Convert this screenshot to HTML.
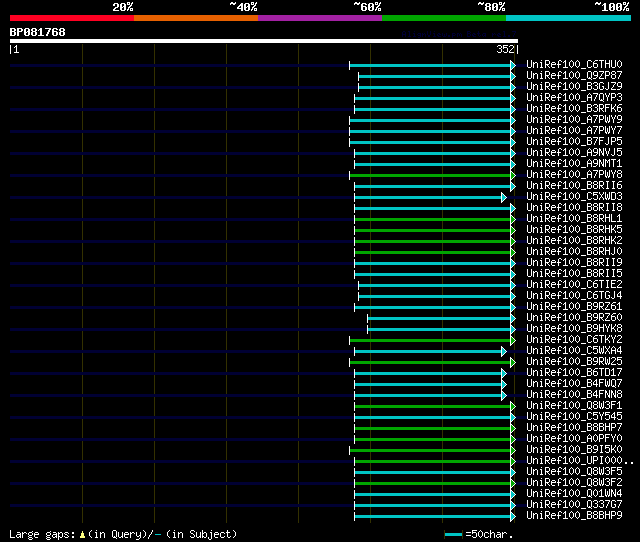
<!DOCTYPE html>
<html><head><meta charset="utf-8"><style>
html,body{margin:0;padding:0;background:#000;width:640px;height:542px;overflow:hidden}
svg{display:block}
</style></head><body>
<svg width="640" height="542" viewBox="0 0 640 542">
<defs><path id="m50" d="M1 3h4v1h-4zM0 4h2v1h-2zM4 4h2v1h-2zM0 5h2v1h-2zM4 5h2v1h-2zM4 6h2v1h-2zM2 7h3v1h-3zM1 8h2v1h-2zM0 9h2v1h-2zM0 10h6v1h-6z"/><path id="m48" d="M1 3h4v1h-4zM0 4h2v1h-2zM4 4h2v1h-2zM0 5h2v1h-2zM4 5h2v1h-2zM0 6h2v1h-2zM3 6h3v1h-3zM0 7h3v1h-3zM4 7h2v1h-2zM0 8h2v1h-2zM4 8h2v1h-2zM0 9h2v1h-2zM4 9h2v1h-2zM1 10h4v1h-4z"/><path id="m37" d="M0 2h3v1h-3zM5 2h1v1h-1zM0 3h1v1h-1zM2 3h1v1h-1zM4 3h2v1h-2zM0 4h3v1h-3zM4 4h1v1h-1zM3 5h2v1h-2zM2 6h2v1h-2zM1 7h2v1h-2zM1 8h1v1h-1zM3 8h3v1h-3zM0 9h2v1h-2zM3 9h1v1h-1zM5 9h1v1h-1zM0 10h1v1h-1zM3 10h3v1h-3z"/><path id="m126" d="M1 2h2v1h-2zM5 2h1v1h-1zM0 3h6v1h-6zM0 4h1v1h-1zM3 4h2v1h-2z"/><path id="m52" d="M4 3h2v1h-2zM3 4h3v1h-3zM2 5h4v1h-4zM1 6h2v1h-2zM4 6h2v1h-2zM0 7h2v1h-2zM4 7h2v1h-2zM0 8h6v1h-6zM4 9h2v1h-2zM4 10h2v1h-2z"/><path id="m54" d="M1 3h4v1h-4zM0 4h2v1h-2zM4 4h2v1h-2zM0 5h2v1h-2zM0 6h5v1h-5zM0 7h2v1h-2zM4 7h2v1h-2zM0 8h2v1h-2zM4 8h2v1h-2zM0 9h2v1h-2zM4 9h2v1h-2zM1 10h4v1h-4z"/><path id="m56" d="M1 3h4v1h-4zM0 4h2v1h-2zM4 4h2v1h-2zM0 5h2v1h-2zM4 5h2v1h-2zM1 6h4v1h-4zM0 7h2v1h-2zM4 7h2v1h-2zM0 8h2v1h-2zM4 8h2v1h-2zM0 9h2v1h-2zM4 9h2v1h-2zM1 10h4v1h-4z"/><path id="m49" d="M2 3h2v1h-2zM1 4h3v1h-3zM0 5h1v1h-1zM2 5h2v1h-2zM2 6h2v1h-2zM2 7h2v1h-2zM2 8h2v1h-2zM2 9h2v1h-2zM0 10h6v1h-6z"/><path id="m66" d="M0 3h5v1h-5zM0 4h2v1h-2zM4 4h2v1h-2zM0 5h2v1h-2zM4 5h2v1h-2zM0 6h5v1h-5zM0 7h2v1h-2zM4 7h2v1h-2zM0 8h2v1h-2zM4 8h2v1h-2zM0 9h2v1h-2zM4 9h2v1h-2zM0 10h5v1h-5z"/><path id="m80" d="M0 3h5v1h-5zM0 4h2v1h-2zM4 4h2v1h-2zM0 5h2v1h-2zM4 5h2v1h-2zM0 6h5v1h-5zM0 7h2v1h-2zM0 8h2v1h-2zM0 9h2v1h-2zM0 10h2v1h-2z"/><path id="m55" d="M0 3h6v1h-6zM4 4h2v1h-2zM3 5h2v1h-2zM3 6h2v1h-2zM2 7h2v1h-2zM2 8h2v1h-2zM1 9h2v1h-2zM1 10h2v1h-2z"/><path id="t65" d="M1 1h2v1h-2zM0 2h1v1h-1zM3 2h1v1h-1zM0 3h1v1h-1zM3 3h1v1h-1zM0 4h4v1h-4zM0 5h1v1h-1zM3 5h1v1h-1zM0 6h1v1h-1zM3 6h1v1h-1z"/><path id="t108" d="M1 1h2v1h-2zM2 2h1v1h-1zM2 3h1v1h-1zM2 4h1v1h-1zM2 5h1v1h-1zM1 6h3v1h-3z"/><path id="t105" d="M2 1h1v1h-1zM1 3h2v1h-2zM2 4h1v1h-1zM2 5h1v1h-1zM1 6h3v1h-3z"/><path id="t103" d="M1 3h3v1h-3zM0 4h1v1h-1zM3 4h1v1h-1zM1 5h3v1h-3zM3 6h1v1h-1zM1 7h2v1h-2z"/><path id="t110" d="M0 3h1v1h-1zM2 3h1v1h-1zM0 4h2v1h-2zM3 4h1v1h-1zM0 5h1v1h-1zM3 5h1v1h-1zM0 6h1v1h-1zM3 6h1v1h-1z"/><path id="t86" d="M0 1h1v1h-1zM3 1h1v1h-1zM0 2h1v1h-1zM3 2h1v1h-1zM0 3h1v1h-1zM3 3h1v1h-1zM0 4h1v1h-1zM3 4h1v1h-1zM1 5h2v1h-2zM1 6h2v1h-2z"/><path id="t101" d="M1 3h2v1h-2zM0 4h1v1h-1zM2 4h2v1h-2zM0 5h2v1h-2zM1 6h3v1h-3z"/><path id="t119" d="M0 3h1v1h-1zM4 3h1v1h-1zM0 4h1v1h-1zM2 4h1v1h-1zM4 4h1v1h-1zM0 5h1v1h-1zM2 5h1v1h-1zM4 5h1v1h-1zM1 6h3v1h-3z"/><path id="t46" d="M1 5h2v1h-2zM1 6h2v1h-2z"/><path id="t112" d="M0 3h3v1h-3zM0 4h1v1h-1zM3 4h1v1h-1zM0 5h3v1h-3zM0 6h1v1h-1zM0 7h1v1h-1z"/><path id="t109" d="M0 3h2v1h-2zM3 3h1v1h-1zM0 4h1v1h-1zM2 4h1v1h-1zM4 4h1v1h-1zM0 5h1v1h-1zM2 5h1v1h-1zM4 5h1v1h-1zM0 6h1v1h-1zM4 6h1v1h-1z"/><path id="t66" d="M0 1h3v1h-3zM0 2h1v1h-1zM3 2h1v1h-1zM0 3h3v1h-3zM0 4h1v1h-1zM3 4h1v1h-1zM0 5h1v1h-1zM3 5h1v1h-1zM0 6h3v1h-3z"/><path id="t116" d="M1 1h1v1h-1zM1 2h1v1h-1zM0 3h3v1h-3zM1 4h1v1h-1zM1 5h1v1h-1zM3 5h1v1h-1zM2 6h1v1h-1z"/><path id="t97" d="M1 3h3v1h-3zM0 4h1v1h-1zM3 4h1v1h-1zM0 5h1v1h-1zM2 5h2v1h-2zM1 6h1v1h-1zM3 6h1v1h-1z"/><path id="t114" d="M0 3h1v1h-1zM2 3h1v1h-1zM0 4h2v1h-2zM3 4h1v1h-1zM0 5h1v1h-1zM0 6h1v1h-1z"/><path id="t55" d="M0 1h4v1h-4zM3 2h1v1h-1zM2 3h1v1h-1zM2 4h1v1h-1zM1 5h1v1h-1zM1 6h1v1h-1z"/><path id="s49" d="M2 3h1v1h-1zM1 4h2v1h-2zM0 5h1v1h-1zM2 5h1v1h-1zM2 6h1v1h-1zM2 7h1v1h-1zM2 8h1v1h-1zM2 9h1v1h-1zM0 10h5v1h-5z"/><path id="s51" d="M1 3h3v1h-3zM0 4h1v1h-1zM4 4h1v1h-1zM4 5h1v1h-1zM2 6h2v1h-2zM4 7h1v1h-1zM4 8h1v1h-1zM0 9h1v1h-1zM4 9h1v1h-1zM1 10h3v1h-3z"/><path id="s53" d="M0 3h5v1h-5zM0 4h1v1h-1zM0 5h4v1h-4zM0 6h1v1h-1zM4 6h1v1h-1zM4 7h1v1h-1zM4 8h1v1h-1zM0 9h1v1h-1zM4 9h1v1h-1zM1 10h3v1h-3z"/><path id="s50" d="M1 3h3v1h-3zM0 4h1v1h-1zM4 4h1v1h-1zM4 5h1v1h-1zM3 6h1v1h-1zM2 7h1v1h-1zM1 8h1v1h-1zM0 9h1v1h-1zM0 10h5v1h-5z"/><path id="s85" d="M0 3h1v1h-1zM4 3h1v1h-1zM0 4h1v1h-1zM4 4h1v1h-1zM0 5h1v1h-1zM4 5h1v1h-1zM0 6h1v1h-1zM4 6h1v1h-1zM0 7h1v1h-1zM4 7h1v1h-1zM0 8h1v1h-1zM4 8h1v1h-1zM0 9h1v1h-1zM4 9h1v1h-1zM1 10h3v1h-3z"/><path id="s110" d="M0 5h1v1h-1zM2 5h2v1h-2zM0 6h2v1h-2zM4 6h1v1h-1zM0 7h1v1h-1zM4 7h1v1h-1zM0 8h1v1h-1zM4 8h1v1h-1zM0 9h1v1h-1zM4 9h1v1h-1zM0 10h1v1h-1zM4 10h1v1h-1z"/><path id="s105" d="M2 3h1v1h-1zM1 5h2v1h-2zM2 6h1v1h-1zM2 7h1v1h-1zM2 8h1v1h-1zM2 9h1v1h-1zM1 10h3v1h-3z"/><path id="s82" d="M0 3h4v1h-4zM0 4h1v1h-1zM4 4h1v1h-1zM0 5h1v1h-1zM4 5h1v1h-1zM0 6h1v1h-1zM4 6h1v1h-1zM0 7h4v1h-4zM0 8h1v1h-1zM2 8h1v1h-1zM0 9h1v1h-1zM3 9h1v1h-1zM0 10h1v1h-1zM4 10h1v1h-1z"/><path id="s101" d="M1 5h3v1h-3zM0 6h1v1h-1zM4 6h1v1h-1zM0 7h5v1h-5zM0 8h1v1h-1zM0 9h1v1h-1zM1 10h3v1h-3z"/><path id="s102" d="M2 3h2v1h-2zM1 4h1v1h-1zM4 4h1v1h-1zM1 5h1v1h-1zM1 6h1v1h-1zM0 7h4v1h-4zM1 8h1v1h-1zM1 9h1v1h-1zM1 10h1v1h-1z"/><path id="s48" d="M2 3h1v1h-1zM1 4h1v1h-1zM3 4h1v1h-1zM0 5h1v1h-1zM4 5h1v1h-1zM0 6h1v1h-1zM4 6h1v1h-1zM0 7h1v1h-1zM4 7h1v1h-1zM0 8h1v1h-1zM4 8h1v1h-1zM1 9h1v1h-1zM3 9h1v1h-1zM2 10h1v1h-1z"/><path id="s95" d="M0 11h5v1h-5z"/><path id="s67" d="M1 3h3v1h-3zM0 4h1v1h-1zM4 4h1v1h-1zM0 5h1v1h-1zM0 6h1v1h-1zM0 7h1v1h-1zM0 8h1v1h-1zM0 9h1v1h-1zM4 9h1v1h-1zM1 10h3v1h-3z"/><path id="s54" d="M2 3h3v1h-3zM1 4h1v1h-1zM0 5h1v1h-1zM0 6h4v1h-4zM0 7h1v1h-1zM4 7h1v1h-1zM0 8h1v1h-1zM4 8h1v1h-1zM0 9h1v1h-1zM4 9h1v1h-1zM1 10h3v1h-3z"/><path id="s84" d="M0 3h5v1h-5zM2 4h1v1h-1zM2 5h1v1h-1zM2 6h1v1h-1zM2 7h1v1h-1zM2 8h1v1h-1zM2 9h1v1h-1zM2 10h1v1h-1z"/><path id="s72" d="M0 3h1v1h-1zM4 3h1v1h-1zM0 4h1v1h-1zM4 4h1v1h-1zM0 5h1v1h-1zM4 5h1v1h-1zM0 6h5v1h-5zM0 7h1v1h-1zM4 7h1v1h-1zM0 8h1v1h-1zM4 8h1v1h-1zM0 9h1v1h-1zM4 9h1v1h-1zM0 10h1v1h-1zM4 10h1v1h-1z"/><path id="s81" d="M1 3h3v1h-3zM0 4h1v1h-1zM4 4h1v1h-1zM0 5h1v1h-1zM4 5h1v1h-1zM0 6h1v1h-1zM4 6h1v1h-1zM0 7h1v1h-1zM4 7h1v1h-1zM0 8h1v1h-1zM4 8h1v1h-1zM0 9h1v1h-1zM2 9h1v1h-1zM4 9h1v1h-1zM1 10h3v1h-3zM4 11h1v1h-1z"/><path id="s57" d="M1 3h3v1h-3zM0 4h1v1h-1zM4 4h1v1h-1zM0 5h1v1h-1zM4 5h1v1h-1zM0 6h1v1h-1zM4 6h1v1h-1zM1 7h4v1h-4zM4 8h1v1h-1zM3 9h1v1h-1zM0 10h3v1h-3z"/><path id="s90" d="M0 3h5v1h-5zM4 4h1v1h-1zM3 5h1v1h-1zM2 6h1v1h-1zM2 7h1v1h-1zM1 8h1v1h-1zM0 9h1v1h-1zM0 10h5v1h-5z"/><path id="s80" d="M0 3h4v1h-4zM0 4h1v1h-1zM4 4h1v1h-1zM0 5h1v1h-1zM4 5h1v1h-1zM0 6h1v1h-1zM4 6h1v1h-1zM0 7h4v1h-4zM0 8h1v1h-1zM0 9h1v1h-1zM0 10h1v1h-1z"/><path id="s56" d="M1 3h3v1h-3zM0 4h1v1h-1zM4 4h1v1h-1zM0 5h1v1h-1zM4 5h1v1h-1zM1 6h3v1h-3zM0 7h1v1h-1zM4 7h1v1h-1zM0 8h1v1h-1zM4 8h1v1h-1zM0 9h1v1h-1zM4 9h1v1h-1zM1 10h3v1h-3z"/><path id="s55" d="M0 3h5v1h-5zM4 4h1v1h-1zM3 5h1v1h-1zM3 6h1v1h-1zM2 7h1v1h-1zM2 8h1v1h-1zM1 9h1v1h-1zM1 10h1v1h-1z"/><path id="s66" d="M0 3h4v1h-4zM0 4h1v1h-1zM4 4h1v1h-1zM0 5h1v1h-1zM4 5h1v1h-1zM0 6h4v1h-4zM0 7h1v1h-1zM4 7h1v1h-1zM0 8h1v1h-1zM4 8h1v1h-1zM0 9h1v1h-1zM4 9h1v1h-1zM0 10h4v1h-4z"/><path id="s71" d="M1 3h3v1h-3zM0 4h1v1h-1zM4 4h1v1h-1zM0 5h1v1h-1zM0 6h1v1h-1zM0 7h1v1h-1zM3 7h2v1h-2zM0 8h1v1h-1zM4 8h1v1h-1zM0 9h1v1h-1zM4 9h1v1h-1zM1 10h3v1h-3z"/><path id="s74" d="M3 3h1v1h-1zM3 4h1v1h-1zM3 5h1v1h-1zM3 6h1v1h-1zM3 7h1v1h-1zM3 8h1v1h-1zM0 9h1v1h-1zM3 9h1v1h-1zM1 10h2v1h-2z"/><path id="s65" d="M2 3h1v1h-1zM1 4h1v1h-1zM3 4h1v1h-1zM0 5h1v1h-1zM4 5h1v1h-1zM0 6h1v1h-1zM4 6h1v1h-1zM0 7h5v1h-5zM0 8h1v1h-1zM4 8h1v1h-1zM0 9h1v1h-1zM4 9h1v1h-1zM0 10h1v1h-1zM4 10h1v1h-1z"/><path id="s89" d="M0 3h1v1h-1zM4 3h1v1h-1zM0 4h1v1h-1zM4 4h1v1h-1zM1 5h1v1h-1zM3 5h1v1h-1zM1 6h1v1h-1zM3 6h1v1h-1zM2 7h1v1h-1zM2 8h1v1h-1zM2 9h1v1h-1zM2 10h1v1h-1z"/><path id="s70" d="M0 3h5v1h-5zM0 4h1v1h-1zM0 5h1v1h-1zM0 6h4v1h-4zM0 7h1v1h-1zM0 8h1v1h-1zM0 9h1v1h-1zM0 10h1v1h-1z"/><path id="s75" d="M0 3h1v1h-1zM4 3h1v1h-1zM0 4h1v1h-1zM4 4h1v1h-1zM0 5h1v1h-1zM3 5h1v1h-1zM0 6h1v1h-1zM2 6h1v1h-1zM0 7h3v1h-3zM0 8h1v1h-1zM3 8h1v1h-1zM0 9h1v1h-1zM4 9h1v1h-1zM0 10h1v1h-1zM4 10h1v1h-1z"/><path id="s87" d="M0 3h1v1h-1zM4 3h1v1h-1zM0 4h1v1h-1zM4 4h1v1h-1zM0 5h1v1h-1zM2 5h1v1h-1zM4 5h1v1h-1zM0 6h1v1h-1zM2 6h1v1h-1zM4 6h1v1h-1zM0 7h1v1h-1zM2 7h1v1h-1zM4 7h1v1h-1zM0 8h1v1h-1zM2 8h1v1h-1zM4 8h1v1h-1zM0 9h2v1h-2zM3 9h2v1h-2zM1 10h1v1h-1zM3 10h1v1h-1z"/><path id="s78" d="M0 3h1v1h-1zM4 3h1v1h-1zM0 4h2v1h-2zM4 4h1v1h-1zM0 5h2v1h-2zM4 5h1v1h-1zM0 6h1v1h-1zM2 6h1v1h-1zM4 6h1v1h-1zM0 7h1v1h-1zM2 7h1v1h-1zM4 7h1v1h-1zM0 8h1v1h-1zM3 8h2v1h-2zM0 9h1v1h-1zM3 9h2v1h-2zM0 10h1v1h-1zM4 10h1v1h-1z"/><path id="s86" d="M0 3h1v1h-1zM4 3h1v1h-1zM0 4h1v1h-1zM4 4h1v1h-1zM0 5h1v1h-1zM4 5h1v1h-1zM1 6h1v1h-1zM3 6h1v1h-1zM1 7h1v1h-1zM3 7h1v1h-1zM1 8h1v1h-1zM3 8h1v1h-1zM2 9h1v1h-1zM2 10h1v1h-1z"/><path id="s77" d="M0 3h1v1h-1zM4 3h1v1h-1zM0 4h2v1h-2zM3 4h2v1h-2zM0 5h1v1h-1zM2 5h1v1h-1zM4 5h1v1h-1zM0 6h1v1h-1zM2 6h1v1h-1zM4 6h1v1h-1zM0 7h1v1h-1zM4 7h1v1h-1zM0 8h1v1h-1zM4 8h1v1h-1zM0 9h1v1h-1zM4 9h1v1h-1zM0 10h1v1h-1zM4 10h1v1h-1z"/><path id="s73" d="M1 3h3v1h-3zM2 4h1v1h-1zM2 5h1v1h-1zM2 6h1v1h-1zM2 7h1v1h-1zM2 8h1v1h-1zM2 9h1v1h-1zM1 10h3v1h-3z"/><path id="s88" d="M0 3h1v1h-1zM4 3h1v1h-1zM0 4h1v1h-1zM4 4h1v1h-1zM1 5h1v1h-1zM3 5h1v1h-1zM2 6h1v1h-1zM2 7h1v1h-1zM1 8h1v1h-1zM3 8h1v1h-1zM0 9h1v1h-1zM4 9h1v1h-1zM0 10h1v1h-1zM4 10h1v1h-1z"/><path id="s68" d="M0 3h4v1h-4zM0 4h1v1h-1zM4 4h1v1h-1zM0 5h1v1h-1zM4 5h1v1h-1zM0 6h1v1h-1zM4 6h1v1h-1zM0 7h1v1h-1zM4 7h1v1h-1zM0 8h1v1h-1zM4 8h1v1h-1zM0 9h1v1h-1zM4 9h1v1h-1zM0 10h4v1h-4z"/><path id="s76" d="M0 3h1v1h-1zM0 4h1v1h-1zM0 5h1v1h-1zM0 6h1v1h-1zM0 7h1v1h-1zM0 8h1v1h-1zM0 9h1v1h-1zM0 10h5v1h-5z"/><path id="s69" d="M0 3h5v1h-5zM0 4h1v1h-1zM0 5h1v1h-1zM0 6h4v1h-4zM0 7h1v1h-1zM0 8h1v1h-1zM0 9h1v1h-1zM0 10h5v1h-5z"/><path id="s52" d="M3 3h1v1h-1zM2 4h2v1h-2zM1 5h1v1h-1zM3 5h1v1h-1zM0 6h1v1h-1zM3 6h1v1h-1zM0 7h1v1h-1zM3 7h1v1h-1zM0 8h5v1h-5zM3 9h1v1h-1zM3 10h1v1h-1z"/><path id="s46" d="M2 9h2v1h-2zM2 10h2v1h-2z"/><path id="s97" d="M1 5h3v1h-3zM4 6h1v1h-1zM1 7h4v1h-4zM0 8h1v1h-1zM4 8h1v1h-1zM0 9h1v1h-1zM3 9h2v1h-2zM1 10h2v1h-2zM4 10h1v1h-1z"/><path id="s114" d="M0 5h1v1h-1zM2 5h2v1h-2zM0 6h2v1h-2zM4 6h1v1h-1zM0 7h1v1h-1zM0 8h1v1h-1zM0 9h1v1h-1zM0 10h1v1h-1z"/><path id="s103" d="M4 4h1v1h-1zM1 5h3v1h-3zM0 6h1v1h-1zM4 6h1v1h-1zM0 7h1v1h-1zM4 7h1v1h-1zM1 8h3v1h-3zM0 9h1v1h-1zM1 10h3v1h-3zM0 11h1v1h-1zM4 11h1v1h-1zM1 12h3v1h-3z"/><path id="s112" d="M0 5h1v1h-1zM2 5h2v1h-2zM0 6h2v1h-2zM4 6h1v1h-1zM0 7h1v1h-1zM4 7h1v1h-1zM0 8h1v1h-1zM4 8h1v1h-1zM0 9h2v1h-2zM4 9h1v1h-1zM0 10h1v1h-1zM2 10h2v1h-2zM0 11h1v1h-1zM0 12h1v1h-1z"/><path id="s115" d="M1 5h3v1h-3zM0 6h1v1h-1zM4 6h1v1h-1zM1 7h2v1h-2zM3 8h1v1h-1zM0 9h1v1h-1zM4 9h1v1h-1zM1 10h3v1h-3z"/><path id="s58" d="M2 5h2v1h-2zM2 6h2v1h-2zM2 9h2v1h-2zM2 10h2v1h-2z"/><path id="s40" d="M3 3h1v1h-1zM2 4h1v1h-1zM1 5h1v1h-1zM1 6h1v1h-1zM1 7h1v1h-1zM1 8h1v1h-1zM2 9h1v1h-1zM3 10h1v1h-1z"/><path id="s117" d="M0 5h1v1h-1zM4 5h1v1h-1zM0 6h1v1h-1zM4 6h1v1h-1zM0 7h1v1h-1zM4 7h1v1h-1zM0 8h1v1h-1zM4 8h1v1h-1zM0 9h1v1h-1zM3 9h2v1h-2zM1 10h2v1h-2zM4 10h1v1h-1z"/><path id="s121" d="M0 5h1v1h-1zM4 5h1v1h-1zM0 6h1v1h-1zM4 6h1v1h-1zM0 7h1v1h-1zM4 7h1v1h-1zM0 8h1v1h-1zM3 8h2v1h-2zM1 9h2v1h-2zM4 9h1v1h-1zM4 10h1v1h-1zM3 11h1v1h-1zM0 12h3v1h-3z"/><path id="s41" d="M1 3h1v1h-1zM2 4h1v1h-1zM3 5h1v1h-1zM3 6h1v1h-1zM3 7h1v1h-1zM3 8h1v1h-1zM2 9h1v1h-1zM1 10h1v1h-1z"/><path id="s47" d="M4 3h1v1h-1zM4 4h1v1h-1zM3 5h1v1h-1zM3 6h1v1h-1zM2 7h1v1h-1zM1 8h1v1h-1zM1 9h1v1h-1zM0 10h1v1h-1zM0 11h1v1h-1z"/><path id="s83" d="M1 3h3v1h-3zM0 4h1v1h-1zM4 4h1v1h-1zM0 5h1v1h-1zM1 6h2v1h-2zM3 7h1v1h-1zM4 8h1v1h-1zM0 9h1v1h-1zM4 9h1v1h-1zM1 10h3v1h-3z"/><path id="s98" d="M0 3h1v1h-1zM0 4h1v1h-1zM0 5h1v1h-1zM2 5h2v1h-2zM0 6h2v1h-2zM4 6h1v1h-1zM0 7h1v1h-1zM4 7h1v1h-1zM0 8h1v1h-1zM4 8h1v1h-1zM0 9h2v1h-2zM4 9h1v1h-1zM0 10h1v1h-1zM2 10h2v1h-2z"/><path id="s106" d="M3 3h1v1h-1zM2 5h2v1h-2zM3 6h1v1h-1zM3 7h1v1h-1zM3 8h1v1h-1zM3 9h1v1h-1zM0 10h1v1h-1zM3 10h1v1h-1zM0 11h1v1h-1zM3 11h1v1h-1zM1 12h2v1h-2z"/><path id="s99" d="M1 5h3v1h-3zM0 6h1v1h-1zM4 6h1v1h-1zM0 7h1v1h-1zM0 8h1v1h-1zM0 9h1v1h-1zM4 9h1v1h-1zM1 10h3v1h-3z"/><path id="s116" d="M1 3h1v1h-1zM1 4h1v1h-1zM0 5h4v1h-4zM1 6h1v1h-1zM1 7h1v1h-1zM1 8h1v1h-1zM1 9h1v1h-1zM4 9h1v1h-1zM2 10h2v1h-2z"/><path id="s61" d="M0 5h5v1h-5zM0 8h5v1h-5z"/><path id="s104" d="M0 3h1v1h-1zM0 4h1v1h-1zM0 5h1v1h-1zM2 5h2v1h-2zM0 6h2v1h-2zM4 6h1v1h-1zM0 7h1v1h-1zM4 7h1v1h-1zM0 8h1v1h-1zM4 8h1v1h-1zM0 9h1v1h-1zM4 9h1v1h-1zM0 10h1v1h-1zM4 10h1v1h-1z"/><g id="pre"><use href="#s85" x="0" y="0"/><use href="#s110" x="6" y="0"/><use href="#s105" x="12" y="0"/><use href="#s82" x="18" y="0"/><use href="#s101" x="24" y="0"/><use href="#s102" x="30" y="0"/><use href="#s49" x="36" y="0"/><use href="#s48" x="42" y="0"/><use href="#s48" x="48" y="0"/><use href="#s95" x="54" y="0"/></g><g id="tri"><path d="M1 2h1v1h-1zM1 3h2v1h-2zM1 4h3v1h-3zM1 5h4v1h-4zM1 6h3v1h-3zM1 7h2v1h-2zM1 8h1v1h-1z"/><path fill="#fff" d="M0 0h1v11h-1zM1 1h1v1h-1zM2 2h1v1h-1zM3 3h1v1h-1zM4 4h1v1h-1zM5 5h1v1h-1zM4 6h1v1h-1zM3 7h1v1h-1zM2 8h1v1h-1zM1 9h1v1h-1z"/></g></defs>
<g shape-rendering="crispEdges">
<rect x="10" y="15" width="124" height="6" fill="#ff0022"/>
<rect x="134" y="15" width="124" height="6" fill="#e66000"/>
<rect x="258" y="15" width="124" height="6" fill="#a321a3"/>
<rect x="382" y="15" width="124" height="6" fill="#00a500"/>
<rect x="506" y="15" width="125" height="6" fill="#00c4c4"/>
<rect x="10" y="39" width="508" height="4" fill="#fff"/>
<rect x="10" y="45" width="1" height="9" fill="#fff"/>
<rect x="517" y="45" width="1" height="9" fill="#fff"/>
<rect x="82" y="44" width="1" height="479" fill="#333000"/>
<rect x="154" y="44" width="1" height="479" fill="#333000"/>
<rect x="226" y="44" width="1" height="479" fill="#333000"/>
<rect x="298" y="44" width="1" height="479" fill="#333000"/>
<rect x="370" y="44" width="1" height="479" fill="#333000"/>
<rect x="442" y="44" width="1" height="479" fill="#333000"/>
<rect x="514" y="44" width="1" height="479" fill="#333000"/>
<rect x="10" y="64" width="517" height="3" fill="#000033"/>
<rect x="10" y="86" width="517" height="3" fill="#000033"/>
<rect x="10" y="108" width="517" height="3" fill="#000033"/>
<rect x="10" y="130" width="517" height="3" fill="#000033"/>
<rect x="10" y="152" width="517" height="3" fill="#000033"/>
<rect x="10" y="174" width="517" height="3" fill="#000033"/>
<rect x="10" y="196" width="517" height="3" fill="#000033"/>
<rect x="10" y="218" width="517" height="3" fill="#000033"/>
<rect x="10" y="240" width="517" height="3" fill="#000033"/>
<rect x="10" y="262" width="517" height="3" fill="#000033"/>
<rect x="10" y="284" width="517" height="3" fill="#000033"/>
<rect x="10" y="306" width="517" height="3" fill="#000033"/>
<rect x="10" y="328" width="517" height="3" fill="#000033"/>
<rect x="10" y="350" width="517" height="3" fill="#000033"/>
<rect x="10" y="372" width="517" height="3" fill="#000033"/>
<rect x="10" y="394" width="517" height="3" fill="#000033"/>
<rect x="10" y="416" width="517" height="3" fill="#000033"/>
<rect x="10" y="438" width="517" height="3" fill="#000033"/>
<rect x="10" y="460" width="517" height="3" fill="#000033"/>
<rect x="10" y="482" width="517" height="3" fill="#000033"/>
<rect x="10" y="504" width="517" height="3" fill="#000033"/>
<rect x="350" y="64" width="160" height="3" fill="#00c4c4"/>
<rect x="349" y="61" width="1" height="9" fill="#fff"/>
<use href="#tri" x="510" y="60" fill="#00c4c4"/>
<rect x="359" y="75" width="151" height="3" fill="#00c4c4"/>
<rect x="358" y="72" width="1" height="9" fill="#fff"/>
<use href="#tri" x="510" y="71" fill="#00c4c4"/>
<rect x="359" y="86" width="151" height="3" fill="#00c4c4"/>
<rect x="358" y="83" width="1" height="9" fill="#fff"/>
<use href="#tri" x="510" y="82" fill="#00c4c4"/>
<rect x="355" y="97" width="155" height="3" fill="#00c4c4"/>
<rect x="354" y="94" width="1" height="9" fill="#fff"/>
<use href="#tri" x="510" y="93" fill="#00c4c4"/>
<rect x="355" y="108" width="155" height="3" fill="#00c4c4"/>
<rect x="354" y="105" width="1" height="9" fill="#fff"/>
<use href="#tri" x="510" y="104" fill="#00c4c4"/>
<rect x="350" y="119" width="160" height="3" fill="#00c4c4"/>
<rect x="349" y="116" width="1" height="9" fill="#fff"/>
<use href="#tri" x="510" y="115" fill="#00c4c4"/>
<rect x="350" y="130" width="160" height="3" fill="#00c4c4"/>
<rect x="349" y="127" width="1" height="9" fill="#fff"/>
<use href="#tri" x="510" y="126" fill="#00c4c4"/>
<rect x="350" y="141" width="160" height="3" fill="#00c4c4"/>
<rect x="349" y="138" width="1" height="9" fill="#fff"/>
<use href="#tri" x="510" y="137" fill="#00c4c4"/>
<rect x="355" y="152" width="155" height="3" fill="#00c4c4"/>
<rect x="354" y="149" width="1" height="9" fill="#fff"/>
<use href="#tri" x="510" y="148" fill="#00c4c4"/>
<rect x="355" y="163" width="155" height="3" fill="#00c4c4"/>
<rect x="354" y="160" width="1" height="9" fill="#fff"/>
<use href="#tri" x="510" y="159" fill="#00c4c4"/>
<rect x="350" y="174" width="160" height="3" fill="#00a500"/>
<rect x="349" y="171" width="1" height="9" fill="#fff"/>
<use href="#tri" x="510" y="170" fill="#00a500"/>
<rect x="355" y="185" width="155" height="3" fill="#00c4c4"/>
<rect x="354" y="182" width="1" height="9" fill="#fff"/>
<use href="#tri" x="510" y="181" fill="#00c4c4"/>
<rect x="355" y="196" width="146" height="3" fill="#00c4c4"/>
<rect x="354" y="193" width="1" height="9" fill="#fff"/>
<use href="#tri" x="501" y="192" fill="#00c4c4"/>
<rect x="355" y="207" width="155" height="3" fill="#00c4c4"/>
<rect x="354" y="204" width="1" height="9" fill="#fff"/>
<use href="#tri" x="510" y="203" fill="#00c4c4"/>
<rect x="355" y="218" width="155" height="3" fill="#00a500"/>
<rect x="354" y="215" width="1" height="9" fill="#fff"/>
<use href="#tri" x="510" y="214" fill="#00a500"/>
<rect x="355" y="229" width="155" height="3" fill="#00a500"/>
<rect x="354" y="226" width="1" height="9" fill="#fff"/>
<use href="#tri" x="510" y="225" fill="#00a500"/>
<rect x="355" y="240" width="155" height="3" fill="#00a500"/>
<rect x="354" y="237" width="1" height="9" fill="#fff"/>
<use href="#tri" x="510" y="236" fill="#00a500"/>
<rect x="355" y="251" width="155" height="3" fill="#00a500"/>
<rect x="354" y="248" width="1" height="9" fill="#fff"/>
<use href="#tri" x="510" y="247" fill="#00a500"/>
<rect x="355" y="262" width="155" height="3" fill="#00c4c4"/>
<rect x="354" y="259" width="1" height="9" fill="#fff"/>
<use href="#tri" x="510" y="258" fill="#00c4c4"/>
<rect x="355" y="273" width="155" height="3" fill="#00c4c4"/>
<rect x="354" y="270" width="1" height="9" fill="#fff"/>
<use href="#tri" x="510" y="269" fill="#00c4c4"/>
<rect x="359" y="284" width="151" height="3" fill="#00c4c4"/>
<rect x="358" y="281" width="1" height="9" fill="#fff"/>
<use href="#tri" x="510" y="280" fill="#00c4c4"/>
<rect x="359" y="295" width="151" height="3" fill="#00c4c4"/>
<rect x="358" y="292" width="1" height="9" fill="#fff"/>
<use href="#tri" x="510" y="291" fill="#00c4c4"/>
<rect x="355" y="306" width="155" height="3" fill="#00c4c4"/>
<rect x="354" y="303" width="1" height="9" fill="#fff"/>
<use href="#tri" x="510" y="302" fill="#00c4c4"/>
<rect x="368" y="317" width="142" height="3" fill="#00c4c4"/>
<rect x="367" y="314" width="1" height="9" fill="#fff"/>
<use href="#tri" x="510" y="313" fill="#00c4c4"/>
<rect x="368" y="328" width="142" height="3" fill="#00c4c4"/>
<rect x="367" y="325" width="1" height="9" fill="#fff"/>
<use href="#tri" x="510" y="324" fill="#00c4c4"/>
<rect x="350" y="339" width="160" height="3" fill="#00a500"/>
<rect x="349" y="336" width="1" height="9" fill="#fff"/>
<use href="#tri" x="510" y="335" fill="#00a500"/>
<rect x="355" y="350" width="146" height="3" fill="#00c4c4"/>
<rect x="354" y="347" width="1" height="9" fill="#fff"/>
<use href="#tri" x="501" y="346" fill="#00c4c4"/>
<rect x="350" y="361" width="160" height="3" fill="#00a500"/>
<rect x="349" y="358" width="1" height="9" fill="#fff"/>
<use href="#tri" x="510" y="357" fill="#00a500"/>
<rect x="355" y="372" width="146" height="3" fill="#00c4c4"/>
<rect x="354" y="369" width="1" height="9" fill="#fff"/>
<use href="#tri" x="501" y="368" fill="#00c4c4"/>
<rect x="355" y="383" width="146" height="3" fill="#00c4c4"/>
<rect x="354" y="380" width="1" height="9" fill="#fff"/>
<use href="#tri" x="501" y="379" fill="#00c4c4"/>
<rect x="355" y="394" width="146" height="3" fill="#00c4c4"/>
<rect x="354" y="391" width="1" height="9" fill="#fff"/>
<use href="#tri" x="501" y="390" fill="#00c4c4"/>
<rect x="355" y="405" width="155" height="3" fill="#00a500"/>
<rect x="354" y="402" width="1" height="9" fill="#fff"/>
<use href="#tri" x="510" y="401" fill="#00a500"/>
<rect x="355" y="416" width="155" height="3" fill="#00c4c4"/>
<rect x="354" y="413" width="1" height="9" fill="#fff"/>
<use href="#tri" x="510" y="412" fill="#00c4c4"/>
<rect x="355" y="427" width="155" height="3" fill="#00a500"/>
<rect x="354" y="424" width="1" height="9" fill="#fff"/>
<use href="#tri" x="510" y="423" fill="#00a500"/>
<rect x="355" y="438" width="155" height="3" fill="#00a500"/>
<rect x="354" y="435" width="1" height="9" fill="#fff"/>
<use href="#tri" x="510" y="434" fill="#00a500"/>
<rect x="350" y="449" width="160" height="3" fill="#00a500"/>
<rect x="349" y="446" width="1" height="9" fill="#fff"/>
<use href="#tri" x="510" y="445" fill="#00a500"/>
<rect x="355" y="460" width="155" height="3" fill="#00a500"/>
<rect x="354" y="457" width="1" height="9" fill="#fff"/>
<use href="#tri" x="510" y="456" fill="#00a500"/>
<rect x="355" y="471" width="155" height="3" fill="#00c4c4"/>
<rect x="354" y="468" width="1" height="9" fill="#fff"/>
<use href="#tri" x="510" y="467" fill="#00c4c4"/>
<rect x="355" y="482" width="155" height="3" fill="#00a500"/>
<rect x="354" y="479" width="1" height="9" fill="#fff"/>
<use href="#tri" x="510" y="478" fill="#00a500"/>
<rect x="355" y="493" width="155" height="3" fill="#00c4c4"/>
<rect x="354" y="490" width="1" height="9" fill="#fff"/>
<use href="#tri" x="510" y="489" fill="#00c4c4"/>
<rect x="355" y="504" width="155" height="3" fill="#00c4c4"/>
<rect x="354" y="501" width="1" height="9" fill="#fff"/>
<use href="#tri" x="510" y="500" fill="#00c4c4"/>
<rect x="355" y="515" width="155" height="3" fill="#00c4c4"/>
<rect x="354" y="512" width="1" height="9" fill="#fff"/>
<use href="#tri" x="510" y="511" fill="#00c4c4"/>
<rect x="444" y="530" width="1" height="9" fill="#333000"/>
<rect x="462" y="530" width="1" height="9" fill="#333000"/>
<rect x="445" y="533" width="17" height="3" fill="#00c4c4"/>
<path d="M82 531h1v2h1v3h1v2h-5v-2h1v-3h1z" fill="#ffff80"/>
<rect x="155" y="534" width="6" height="1" fill="#00c4c4"/>
<g fill="#fff"><use href="#m50" x="113" y="0"/><use href="#m48" x="120" y="0"/><use href="#m37" x="127" y="0"/></g>
<g fill="#fff"><use href="#m126" x="230" y="0"/><use href="#m52" x="237" y="0"/><use href="#m48" x="244" y="0"/><use href="#m37" x="251" y="0"/></g>
<g fill="#fff"><use href="#m126" x="354" y="0"/><use href="#m54" x="361" y="0"/><use href="#m48" x="368" y="0"/><use href="#m37" x="375" y="0"/></g>
<g fill="#fff"><use href="#m126" x="478" y="0"/><use href="#m56" x="485" y="0"/><use href="#m48" x="492" y="0"/><use href="#m37" x="499" y="0"/></g>
<g fill="#fff"><use href="#m126" x="595" y="0"/><use href="#m49" x="602" y="0"/><use href="#m48" x="609" y="0"/><use href="#m48" x="616" y="0"/><use href="#m37" x="623" y="0"/></g>
<g fill="#fff"><use href="#m66" x="10" y="25"/><use href="#m80" x="17" y="25"/><use href="#m48" x="24" y="25"/><use href="#m56" x="31" y="25"/><use href="#m49" x="38" y="25"/><use href="#m55" x="45" y="25"/><use href="#m54" x="52" y="25"/><use href="#m56" x="59" y="25"/></g>
<g fill="#000033"><use href="#t65" x="402" y="30"/><use href="#t108" x="407" y="30"/><use href="#t105" x="412" y="30"/><use href="#t103" x="417" y="30"/><use href="#t110" x="422" y="30"/><use href="#t86" x="427" y="30"/><use href="#t105" x="432" y="30"/><use href="#t101" x="437" y="30"/><use href="#t119" x="442" y="30"/><use href="#t46" x="447" y="30"/><use href="#t112" x="452" y="30"/><use href="#t109" x="457" y="30"/><use href="#t66" x="467" y="30"/><use href="#t101" x="472" y="30"/><use href="#t116" x="477" y="30"/><use href="#t97" x="482" y="30"/><use href="#t114" x="492" y="30"/><use href="#t101" x="497" y="30"/><use href="#t108" x="502" y="30"/><use href="#t46" x="507" y="30"/><use href="#t55" x="512" y="30"/></g>
<g fill="#fff"><use href="#s49" x="14" y="42"/></g>
<g fill="#fff"><use href="#s51" x="497" y="42"/><use href="#s53" x="503" y="42"/><use href="#s50" x="509" y="42"/></g>
<g fill="#fff"><use href="#pre" x="527" y="57"/><g fill="#fff"><use href="#s67" x="587" y="57"/><use href="#s54" x="593" y="57"/><use href="#s84" x="599" y="57"/><use href="#s72" x="605" y="57"/><use href="#s85" x="611" y="57"/><use href="#s48" x="617" y="57"/></g><use href="#pre" x="527" y="68"/><g fill="#fff"><use href="#s81" x="587" y="68"/><use href="#s57" x="593" y="68"/><use href="#s90" x="599" y="68"/><use href="#s80" x="605" y="68"/><use href="#s56" x="611" y="68"/><use href="#s55" x="617" y="68"/></g><use href="#pre" x="527" y="79"/><g fill="#fff"><use href="#s66" x="587" y="79"/><use href="#s51" x="593" y="79"/><use href="#s71" x="599" y="79"/><use href="#s74" x="605" y="79"/><use href="#s90" x="611" y="79"/><use href="#s57" x="617" y="79"/></g><use href="#pre" x="527" y="90"/><g fill="#fff"><use href="#s65" x="587" y="90"/><use href="#s55" x="593" y="90"/><use href="#s81" x="599" y="90"/><use href="#s89" x="605" y="90"/><use href="#s80" x="611" y="90"/><use href="#s51" x="617" y="90"/></g><use href="#pre" x="527" y="101"/><g fill="#fff"><use href="#s66" x="587" y="101"/><use href="#s51" x="593" y="101"/><use href="#s82" x="599" y="101"/><use href="#s70" x="605" y="101"/><use href="#s75" x="611" y="101"/><use href="#s54" x="617" y="101"/></g><use href="#pre" x="527" y="112"/><g fill="#fff"><use href="#s65" x="587" y="112"/><use href="#s55" x="593" y="112"/><use href="#s80" x="599" y="112"/><use href="#s87" x="605" y="112"/><use href="#s89" x="611" y="112"/><use href="#s57" x="617" y="112"/></g><use href="#pre" x="527" y="123"/><g fill="#fff"><use href="#s65" x="587" y="123"/><use href="#s55" x="593" y="123"/><use href="#s80" x="599" y="123"/><use href="#s87" x="605" y="123"/><use href="#s89" x="611" y="123"/><use href="#s55" x="617" y="123"/></g><use href="#pre" x="527" y="134"/><g fill="#fff"><use href="#s66" x="587" y="134"/><use href="#s55" x="593" y="134"/><use href="#s70" x="599" y="134"/><use href="#s74" x="605" y="134"/><use href="#s80" x="611" y="134"/><use href="#s53" x="617" y="134"/></g><use href="#pre" x="527" y="145"/><g fill="#fff"><use href="#s65" x="587" y="145"/><use href="#s57" x="593" y="145"/><use href="#s78" x="599" y="145"/><use href="#s86" x="605" y="145"/><use href="#s74" x="611" y="145"/><use href="#s53" x="617" y="145"/></g><use href="#pre" x="527" y="156"/><g fill="#fff"><use href="#s65" x="587" y="156"/><use href="#s57" x="593" y="156"/><use href="#s78" x="599" y="156"/><use href="#s77" x="605" y="156"/><use href="#s84" x="611" y="156"/><use href="#s49" x="617" y="156"/></g><use href="#pre" x="527" y="167"/><g fill="#fff"><use href="#s65" x="587" y="167"/><use href="#s55" x="593" y="167"/><use href="#s80" x="599" y="167"/><use href="#s87" x="605" y="167"/><use href="#s89" x="611" y="167"/><use href="#s56" x="617" y="167"/></g><use href="#pre" x="527" y="178"/><g fill="#fff"><use href="#s66" x="587" y="178"/><use href="#s56" x="593" y="178"/><use href="#s82" x="599" y="178"/><use href="#s73" x="605" y="178"/><use href="#s73" x="611" y="178"/><use href="#s54" x="617" y="178"/></g><use href="#pre" x="527" y="189"/><g fill="#fff"><use href="#s67" x="587" y="189"/><use href="#s53" x="593" y="189"/><use href="#s88" x="599" y="189"/><use href="#s87" x="605" y="189"/><use href="#s68" x="611" y="189"/><use href="#s51" x="617" y="189"/></g><use href="#pre" x="527" y="200"/><g fill="#fff"><use href="#s66" x="587" y="200"/><use href="#s56" x="593" y="200"/><use href="#s82" x="599" y="200"/><use href="#s73" x="605" y="200"/><use href="#s73" x="611" y="200"/><use href="#s56" x="617" y="200"/></g><use href="#pre" x="527" y="211"/><g fill="#fff"><use href="#s66" x="587" y="211"/><use href="#s56" x="593" y="211"/><use href="#s82" x="599" y="211"/><use href="#s72" x="605" y="211"/><use href="#s76" x="611" y="211"/><use href="#s49" x="617" y="211"/></g><use href="#pre" x="527" y="222"/><g fill="#fff"><use href="#s66" x="587" y="222"/><use href="#s56" x="593" y="222"/><use href="#s82" x="599" y="222"/><use href="#s72" x="605" y="222"/><use href="#s75" x="611" y="222"/><use href="#s53" x="617" y="222"/></g><use href="#pre" x="527" y="233"/><g fill="#fff"><use href="#s66" x="587" y="233"/><use href="#s56" x="593" y="233"/><use href="#s82" x="599" y="233"/><use href="#s72" x="605" y="233"/><use href="#s75" x="611" y="233"/><use href="#s50" x="617" y="233"/></g><use href="#pre" x="527" y="244"/><g fill="#fff"><use href="#s66" x="587" y="244"/><use href="#s56" x="593" y="244"/><use href="#s82" x="599" y="244"/><use href="#s72" x="605" y="244"/><use href="#s74" x="611" y="244"/><use href="#s48" x="617" y="244"/></g><use href="#pre" x="527" y="255"/><g fill="#fff"><use href="#s66" x="587" y="255"/><use href="#s56" x="593" y="255"/><use href="#s82" x="599" y="255"/><use href="#s73" x="605" y="255"/><use href="#s73" x="611" y="255"/><use href="#s57" x="617" y="255"/></g><use href="#pre" x="527" y="266"/><g fill="#fff"><use href="#s66" x="587" y="266"/><use href="#s56" x="593" y="266"/><use href="#s82" x="599" y="266"/><use href="#s73" x="605" y="266"/><use href="#s73" x="611" y="266"/><use href="#s53" x="617" y="266"/></g><use href="#pre" x="527" y="277"/><g fill="#fff"><use href="#s67" x="587" y="277"/><use href="#s54" x="593" y="277"/><use href="#s84" x="599" y="277"/><use href="#s73" x="605" y="277"/><use href="#s69" x="611" y="277"/><use href="#s50" x="617" y="277"/></g><use href="#pre" x="527" y="288"/><g fill="#fff"><use href="#s67" x="587" y="288"/><use href="#s54" x="593" y="288"/><use href="#s84" x="599" y="288"/><use href="#s71" x="605" y="288"/><use href="#s74" x="611" y="288"/><use href="#s52" x="617" y="288"/></g><use href="#pre" x="527" y="299"/><g fill="#fff"><use href="#s66" x="587" y="299"/><use href="#s57" x="593" y="299"/><use href="#s82" x="599" y="299"/><use href="#s90" x="605" y="299"/><use href="#s54" x="611" y="299"/><use href="#s49" x="617" y="299"/></g><use href="#pre" x="527" y="310"/><g fill="#fff"><use href="#s66" x="587" y="310"/><use href="#s57" x="593" y="310"/><use href="#s82" x="599" y="310"/><use href="#s90" x="605" y="310"/><use href="#s54" x="611" y="310"/><use href="#s48" x="617" y="310"/></g><use href="#pre" x="527" y="321"/><g fill="#fff"><use href="#s66" x="587" y="321"/><use href="#s57" x="593" y="321"/><use href="#s72" x="599" y="321"/><use href="#s89" x="605" y="321"/><use href="#s75" x="611" y="321"/><use href="#s56" x="617" y="321"/></g><use href="#pre" x="527" y="332"/><g fill="#fff"><use href="#s67" x="587" y="332"/><use href="#s54" x="593" y="332"/><use href="#s84" x="599" y="332"/><use href="#s75" x="605" y="332"/><use href="#s89" x="611" y="332"/><use href="#s50" x="617" y="332"/></g><use href="#pre" x="527" y="343"/><g fill="#fff"><use href="#s67" x="587" y="343"/><use href="#s53" x="593" y="343"/><use href="#s87" x="599" y="343"/><use href="#s88" x="605" y="343"/><use href="#s65" x="611" y="343"/><use href="#s52" x="617" y="343"/></g><use href="#pre" x="527" y="354"/><g fill="#fff"><use href="#s66" x="587" y="354"/><use href="#s57" x="593" y="354"/><use href="#s82" x="599" y="354"/><use href="#s87" x="605" y="354"/><use href="#s50" x="611" y="354"/><use href="#s53" x="617" y="354"/></g><use href="#pre" x="527" y="365"/><g fill="#fff"><use href="#s66" x="587" y="365"/><use href="#s54" x="593" y="365"/><use href="#s84" x="599" y="365"/><use href="#s68" x="605" y="365"/><use href="#s49" x="611" y="365"/><use href="#s55" x="617" y="365"/></g><use href="#pre" x="527" y="376"/><g fill="#fff"><use href="#s66" x="587" y="376"/><use href="#s52" x="593" y="376"/><use href="#s70" x="599" y="376"/><use href="#s87" x="605" y="376"/><use href="#s81" x="611" y="376"/><use href="#s55" x="617" y="376"/></g><use href="#pre" x="527" y="387"/><g fill="#fff"><use href="#s66" x="587" y="387"/><use href="#s52" x="593" y="387"/><use href="#s70" x="599" y="387"/><use href="#s78" x="605" y="387"/><use href="#s78" x="611" y="387"/><use href="#s56" x="617" y="387"/></g><use href="#pre" x="527" y="398"/><g fill="#fff"><use href="#s81" x="587" y="398"/><use href="#s56" x="593" y="398"/><use href="#s87" x="599" y="398"/><use href="#s51" x="605" y="398"/><use href="#s70" x="611" y="398"/><use href="#s49" x="617" y="398"/></g><use href="#pre" x="527" y="409"/><g fill="#fff"><use href="#s67" x="587" y="409"/><use href="#s53" x="593" y="409"/><use href="#s89" x="599" y="409"/><use href="#s53" x="605" y="409"/><use href="#s52" x="611" y="409"/><use href="#s53" x="617" y="409"/></g><use href="#pre" x="527" y="420"/><g fill="#fff"><use href="#s66" x="587" y="420"/><use href="#s56" x="593" y="420"/><use href="#s66" x="599" y="420"/><use href="#s72" x="605" y="420"/><use href="#s80" x="611" y="420"/><use href="#s55" x="617" y="420"/></g><use href="#pre" x="527" y="431"/><g fill="#fff"><use href="#s65" x="587" y="431"/><use href="#s48" x="593" y="431"/><use href="#s80" x="599" y="431"/><use href="#s70" x="605" y="431"/><use href="#s89" x="611" y="431"/><use href="#s48" x="617" y="431"/></g><use href="#pre" x="527" y="442"/><g fill="#fff"><use href="#s66" x="587" y="442"/><use href="#s57" x="593" y="442"/><use href="#s73" x="599" y="442"/><use href="#s53" x="605" y="442"/><use href="#s75" x="611" y="442"/><use href="#s48" x="617" y="442"/></g><use href="#pre" x="527" y="453"/><g fill="#fff"><use href="#s85" x="587" y="453"/><use href="#s80" x="593" y="453"/><use href="#s73" x="599" y="453"/><use href="#s48" x="605" y="453"/><use href="#s48" x="611" y="453"/><use href="#s48" x="617" y="453"/><use href="#s46" x="623" y="453"/><use href="#s46" x="629" y="453"/></g><use href="#pre" x="527" y="464"/><g fill="#fff"><use href="#s81" x="587" y="464"/><use href="#s56" x="593" y="464"/><use href="#s87" x="599" y="464"/><use href="#s51" x="605" y="464"/><use href="#s70" x="611" y="464"/><use href="#s53" x="617" y="464"/></g><use href="#pre" x="527" y="475"/><g fill="#fff"><use href="#s81" x="587" y="475"/><use href="#s56" x="593" y="475"/><use href="#s87" x="599" y="475"/><use href="#s51" x="605" y="475"/><use href="#s70" x="611" y="475"/><use href="#s50" x="617" y="475"/></g><use href="#pre" x="527" y="486"/><g fill="#fff"><use href="#s81" x="587" y="486"/><use href="#s48" x="593" y="486"/><use href="#s49" x="599" y="486"/><use href="#s87" x="605" y="486"/><use href="#s78" x="611" y="486"/><use href="#s52" x="617" y="486"/></g><use href="#pre" x="527" y="497"/><g fill="#fff"><use href="#s81" x="587" y="497"/><use href="#s51" x="593" y="497"/><use href="#s51" x="599" y="497"/><use href="#s55" x="605" y="497"/><use href="#s71" x="611" y="497"/><use href="#s55" x="617" y="497"/></g><use href="#pre" x="527" y="508"/><g fill="#fff"><use href="#s66" x="587" y="508"/><use href="#s56" x="593" y="508"/><use href="#s66" x="599" y="508"/><use href="#s72" x="605" y="508"/><use href="#s80" x="611" y="508"/><use href="#s57" x="617" y="508"/></g></g>
<g fill="#fff"><use href="#s76" x="10" y="527"/><use href="#s97" x="16" y="527"/><use href="#s114" x="22" y="527"/><use href="#s103" x="28" y="527"/><use href="#s101" x="34" y="527"/><use href="#s103" x="46" y="527"/><use href="#s97" x="52" y="527"/><use href="#s112" x="58" y="527"/><use href="#s115" x="64" y="527"/><use href="#s58" x="70" y="527"/></g>
<g fill="#fff"><use href="#s40" x="88" y="527"/><use href="#s105" x="94" y="527"/><use href="#s110" x="100" y="527"/><use href="#s81" x="112" y="527"/><use href="#s117" x="118" y="527"/><use href="#s101" x="124" y="527"/><use href="#s114" x="130" y="527"/><use href="#s121" x="136" y="527"/><use href="#s41" x="142" y="527"/><use href="#s47" x="148" y="527"/></g>
<g fill="#fff"><use href="#s40" x="166" y="527"/><use href="#s105" x="172" y="527"/><use href="#s110" x="178" y="527"/><use href="#s83" x="190" y="527"/><use href="#s117" x="196" y="527"/><use href="#s98" x="202" y="527"/><use href="#s106" x="208" y="527"/><use href="#s101" x="214" y="527"/><use href="#s99" x="220" y="527"/><use href="#s116" x="226" y="527"/><use href="#s41" x="232" y="527"/></g>
<g fill="#fff"><use href="#s61" x="466" y="527"/><use href="#s53" x="472" y="527"/><use href="#s48" x="478" y="527"/><use href="#s99" x="484" y="527"/><use href="#s104" x="490" y="527"/><use href="#s97" x="496" y="527"/><use href="#s114" x="502" y="527"/><use href="#s46" x="508" y="527"/></g>
</g>
</svg>
</body></html>
